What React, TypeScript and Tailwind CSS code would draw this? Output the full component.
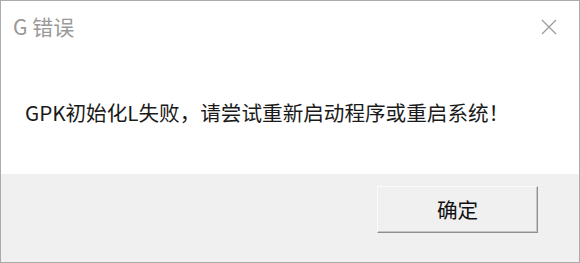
import React from 'react';

const font = '"Noto Sans CJK SC", "Microsoft YaHei", "Liberation Sans", sans-serif';

function CloseIcon() {
  return (
    <svg width="16" height="16" viewBox="0 0 16 16" className="text-[#9a9a9a]">
      <path d="M1 1 L15 15 M15 1 L1 15" stroke="currentColor" strokeWidth="1.2" fill="none" />
    </svg>
  );
}

export default function App() {
  return (
    <div
      className="w-[580px] h-[263px] flex flex-col border border-[#ababab] bg-white"
      style={{ fontFamily: font }}
    >
      {/* title bar */}
      <div className="h-[52px] flex items-center justify-between pl-[12px] pr-[22px]">
        <span className="text-[21px] leading-none text-[#999999] -mt-[2px]">G 错误</span>
        <CloseIcon />
      </div>

      {/* message */}
      <div className="flex-1 flex items-center pl-[24px] pb-[3px]">
        <span className="text-[20.6px] leading-none text-[#1a1a1a]">
          GPK初始化L失败，请尝试重新启动程序或重启系统！
        </span>
      </div>

      {/* footer */}
      <div className="h-[88px] bg-[#f0f0f0] flex items-start justify-end pt-[12px] pr-[41px]">
        <button className="w-[161px] h-[47px] bg-[#f0f0f0] border-t border-l border-t-[#fbfbfb] border-l-[#fbfbfb] border-r border-b border-r-[#8f8f8f] border-b-[#8f8f8f] shadow-[inset_-1px_-1px_0_#c6c6c6] text-[20.6px] leading-none text-[#111111] flex items-center justify-center">
          确定
        </button>
      </div>
    </div>
  );
}
